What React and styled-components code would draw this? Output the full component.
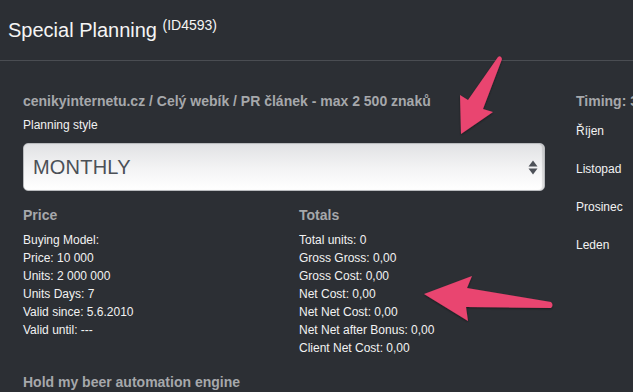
import React from "react";
import styled, { createGlobalStyle } from "styled-components";

const GlobalStyle = createGlobalStyle`
  html, body {
    margin: 0;
    padding: 0;
    background: #2c2f34;
    overflow: hidden;
  }
  body {
    font-family: "Liberation Sans", Arial, sans-serif;
    color: #f2f2f2;
  }
`;

const Page = styled.div`
  position: relative;
  width: 633px;
  height: 392px;
  overflow: hidden;
  background: #2c2f34;
`;

const Header = styled.div`
  height: 61px;
  box-sizing: border-box;
  padding: 18px 8px 0;
  border-bottom: 1px solid #4a4d52;
`;

const Title = styled.h1`
  margin: 0;
  font-size: 20px;
  line-height: 24px;
  font-weight: normal;
  color: #f5f5f5;
  white-space: nowrap;

  sup {
    font-size: 14px;
    vertical-align: 7px;
    line-height: 0;
  }
`;

const Content = styled.div`
  display: flex;
  gap: 31px;
  padding: 32px 0 0 23px;
`;

const MainColumn = styled.div`
  flex: 0 0 522px;
`;

const SideColumn = styled.div`
  flex: none;
  white-space: nowrap;
`;

const Heading = styled.h3`
  margin: ${(p) => p.$mt || 0}px 0 0;
  font-size: 14px;
  line-height: 16px;
  font-weight: bold;
  color: #a6a8ab;
  white-space: nowrap;
`;

const Label = styled.div`
  margin-top: 9px;
  font-size: 12px;
  line-height: 14px;
  color: #f2f2f2;
`;

const SelectBox = styled.div`
  margin-top: 11px;
  height: 48px;
  box-sizing: border-box;
  display: flex;
  align-items: center;
  justify-content: space-between;
  padding: 0 6px 0 9px;
  border-radius: 5px;
  border: 1px solid #b9bbbe;
  background: linear-gradient(#e1e2e4, #f4f4f5 55%, #ffffff);
  box-shadow: inset -2px 0 1px rgba(0, 0, 0, 0.12);
`;

const SelectValue = styled.span`
  font-size: 20px;
  color: #4b5057;
  letter-spacing: 0.2px;
`;

const Stats = styled.div`
  display: grid;
  grid-template-columns: 276px 1fr;
  margin-top: 16px;
`;

const List = styled.div`
  margin-top: 8px;
`;

const Line = styled.div`
  font-size: 12px;
  line-height: 18px;
  color: #f2f2f2;
  white-space: nowrap;
`;

const MonthList = styled.div`
  margin-top: 15px;
`;

const Month = styled.div`
  font-size: 12px;
  line-height: 14px;
  padding-bottom: 24px;
  color: #f2f2f2;
`;

const Overlay = styled.svg`
  position: absolute;
  top: 0;
  left: 0;
  pointer-events: none;
`;

function SortIcon() {
  return (
    <svg width="10" height="15" viewBox="0 0 10 15">
      <path d="M5 0.5 L9.5 6.5 L0.5 6.5 Z" fill="#4d5158" />
      <path d="M5 14.5 L9.5 8.5 L0.5 8.5 Z" fill="#4d5158" />
    </svg>
  );
}

const price = [
  "Buying Model:",
  "Price: 10 000",
  "Units: 2 000 000",
  "Units Days: 7",
  "Valid since: 5.6.2010",
  "Valid until: ---",
];

const totals = [
  "Total units: 0",
  "Gross Gross: 0,00",
  "Gross Cost: 0,00",
  "Net Cost: 0,00",
  "Net Net Cost: 0,00",
  "Net Net after Bonus: 0,00",
  "Client Net Cost: 0,00",
];

const months = ["Říjen", "Listopad", "Prosinec", "Leden"];

export default function App() {
  return (
    <Page>
      <GlobalStyle />
      <Header>
        <Title>
          Special Planning <sup>(ID4593)</sup>
        </Title>
      </Header>
      <Content>
        <MainColumn>
          <Heading>cenikyinternetu.cz / Celý webík / PR článek - max 2 500 znaků</Heading>
          <Label>Planning style</Label>
          <SelectBox>
            <SelectValue>MONTHLY</SelectValue>
            <SortIcon />
          </SelectBox>
          <Stats>
            <div>
              <Heading>Price</Heading>
              <List>
                {price.map((l) => (
                  <Line key={l}>{l}</Line>
                ))}
              </List>
            </div>
            <div>
              <Heading>Totals</Heading>
              <List>
                {totals.map((l) => (
                  <Line key={l}>{l}</Line>
                ))}
              </List>
            </div>
          </Stats>
          <Heading $mt={17}>Hold my beer automation engine</Heading>
        </MainColumn>
        <SideColumn>
          <Heading>Timing: 3 měsíce</Heading>
          <MonthList>
            {months.map((m) => (
              <Month key={m}>{m}</Month>
            ))}
          </MonthList>
        </SideColumn>
      </Content>
      <Overlay width="633" height="392" viewBox="0 0 633 392">
        <defs>
          <filter id="sh" x="-20%" y="-20%" width="140%" height="140%">
            <feDropShadow dx="0" dy="1" stdDeviation="1.2" floodColor="#000" floodOpacity="0.45" />
          </filter>
        </defs>
        <g fill="#e9446f" filter="url(#sh)">
          <path d="M498 57 Q501 55 502 59 L483 109 L493 112 L461 134 L460 95 L468 100 Z" />
          <path d="M424 294 L472 276 L467 288 L551 302 Q554 305 551 308 L466 307 L468 321 Z" />
        </g>
      </Overlay>
    </Page>
  );
}
